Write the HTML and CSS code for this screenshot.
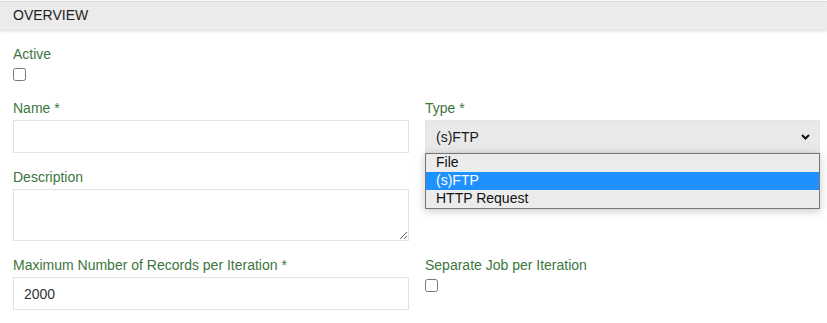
FILE: index.html
```html
<!DOCTYPE html>
<html lang="en">
<head>
<meta charset="utf-8">
<title>Overview</title>
<link rel="stylesheet" href="styles.css">
</head>
<body>
<div class="page">
  <div class="section-header">OVERVIEW</div>
  <form class="form">
    <div class="group group-check">
      <label class="label" for="active">Active</label>
      <input class="checkbox" type="checkbox" id="active">
    </div>
    <div class="group"></div>

    <div class="group">
      <label class="label" for="name">Name *</label>
      <input class="input" type="text" id="name">
    </div>
    <div class="group">
      <label class="label">Type *</label>
      <div class="select-wrap">
        <div class="select">
          <span>(s)FTP</span>
          <svg class="chevron" width="9" height="6" viewBox="0 0 9 6"><path d="M1 1 L4.5 4.5 L8 1" fill="none" stroke="#111" stroke-width="2"/></svg>
        </div>
        <ul class="listbox">
          <li class="option">File</li>
          <li class="option selected">(s)FTP</li>
          <li class="option">HTTP Request</li>
        </ul>
      </div>
    </div>

    <div class="group">
      <label class="label" for="desc">Description</label>
      <textarea class="textarea" id="desc"></textarea>
    </div>
    <div class="group"></div>

    <div class="group">
      <label class="label" for="max">Maximum Number of Records per Iteration *</label>
      <input class="input" type="text" id="max" value="2000">
    </div>
    <div class="group">
      <label class="label" for="sep">Separate Job per Iteration</label>
      <input class="checkbox" type="checkbox" id="sep">
    </div>
  </form>
</div>
</body>
</html>
```
FILE: styles.css
```css
html, body {
  margin: 0;
  padding: 0;
  background: #ffffff;
}
body {
  font-family: "Liberation Sans", Arial, sans-serif;
  font-size: 14px;
  line-height: 20px;
  color: #222;
}
.page {
  padding-top: 1px;
}
.section-header {
  border-top: 1px solid #dcdcdc;
  background: #ebebeb;
  padding: 3px 13px 5px;
  color: #1e1e1e;
  box-shadow: 0 1px 3px rgba(0, 0, 0, 0.16);
  position: relative;
}
.form {
  display: grid;
  grid-template-columns: 396px 395px;
  column-gap: 16px;
  align-items: start;
  padding: 14px 7px 0 13px;
  margin: 0;
}
.group {
  margin-bottom: 14px;
}
.group-check {
  margin-bottom: 17px;
}
.label {
  display: block;
  color: #3c763d;
  margin-bottom: 2px;
}
.checkbox {
  display: block;
  width: 13px;
  height: 13px;
  margin: 4px 0 0 0;
}
.input, .textarea {
  display: block;
  box-sizing: border-box;
  width: 100%;
  border: 1px solid #e2e2e2;
  border-radius: 0;
  background: #fff;
  font-family: inherit;
  font-size: 14px;
  color: #333;
  padding: 0 10px;
  margin: 0;
  outline: none;
}
.input {
  height: 33px;
}
.textarea {
  height: 52px;
  padding: 6px 10px;
  resize: both;
}
.select-wrap {
  position: relative;
}
.select {
  box-sizing: border-box;
  height: 33px;
  background: #e9e9e9;
  border: 1px solid #e4e4e4;
  display: flex;
  align-items: center;
  justify-content: space-between;
  padding: 0 9px 0 10px;
  color: #1a1a1a;
}
.chevron {
  display: block;
}
.listbox {
  position: absolute;
  top: 33px;
  left: 0;
  right: 0;
  margin: 0;
  padding: 0;
  list-style: none;
  background: #ececec;
  border: 1px solid #777;
  box-shadow: 0 2px 9px rgba(0, 0, 0, 0.22);
  z-index: 5;
}
.option {
  height: 18px;
  line-height: 17px;
  padding: 0 10px;
  color: #111;
}
.option.selected {
  background: #1e90ff;
  color: #fff;
}
```
